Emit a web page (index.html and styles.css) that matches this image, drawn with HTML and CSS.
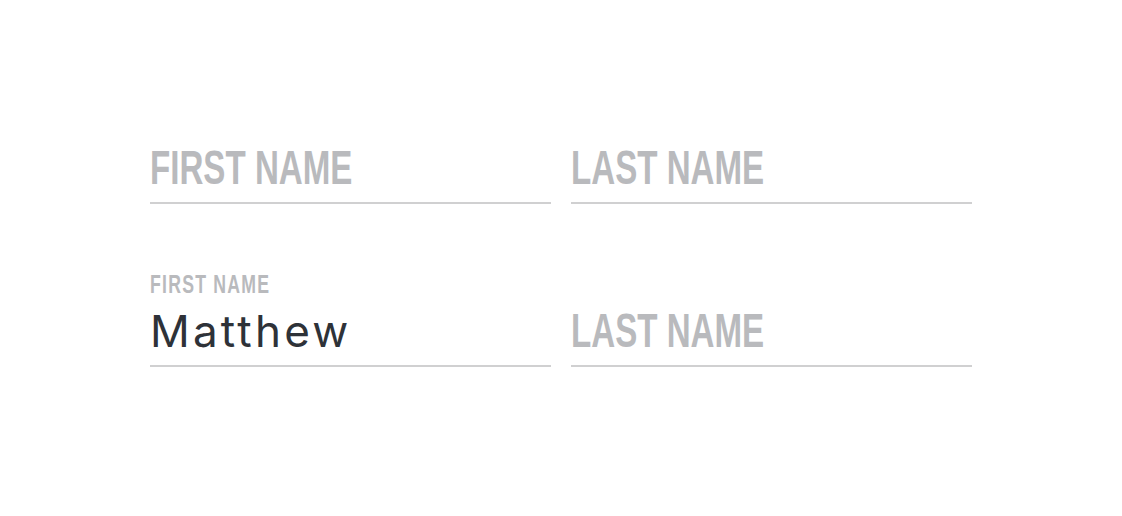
FILE: index.html
```html
<!DOCTYPE html>
<html lang="en">
  <head>
    <meta charset="UTF-8" />
    <title>Name Fields</title>
    <link rel="stylesheet" href="styles.css">
  </head>
  <body>
    <div class="name-form">
      <div class="name-row">
        <div class="field">
          <span class="placeholder">First Name</span>
        </div>
        <div class="field">
          <span class="placeholder">Last Name</span>
        </div>
      </div>

      <div class="name-row">
        <div class="field filled">
          <span class="field-label">First Name</span>
          <span class="field-value">Matthew</span>
        </div>
        <div class="field">
          <span class="placeholder">Last Name</span>
        </div>
      </div>
    </div>
  </body>
</html>
```

FILE: styles.css
```css
body {
  margin: 0;
  background-color: #ffffff;
  font-family: "Liberation Sans", Arial, sans-serif;
}
.name-form {
  width: 822px;
  margin-left: 150px;
  padding-top: 143px;
  display: flex;
  flex-direction: column;
  gap: 67px;
}
.name-row {
  display: grid;
  grid-template-columns: 1fr 1fr;
  column-gap: 20px;
  align-items: end;
}
.field {
  display: flex;
  flex-direction: column;
  align-items: flex-start;
  border-bottom: 2px solid #d0d0d1;
  padding-bottom: 8px;
}
.placeholder,
.field-label {
  font-family: "Liberation Sans", sans-serif;
  font-weight: bold;
  text-transform: uppercase;
  color: #b9babd;
  line-height: 1;
  transform-origin: left bottom;
}
.placeholder {
  font-size: 49px;
  transform: scaleX(0.676);
  margin-bottom: 2px;
}
.field-label {
  font-size: 26px;
  letter-spacing: 1.8px;
  transform: scaleX(0.68);
  margin-bottom: 12px;
}
.field-value {
  font-family: Inter, "Open Sans", sans-serif;
  font-size: 44px;
  letter-spacing: 3.2px;
  line-height: 1;
  color: #2e3238;
  font-variant-ligatures: none;
  margin-bottom: 4px;
}
```
